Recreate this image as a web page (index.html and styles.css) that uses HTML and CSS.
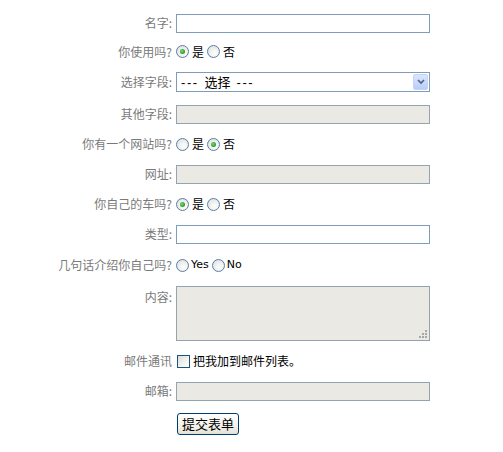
FILE: index.html
```html
<!DOCTYPE html>
<html lang="zh">
<head>
<meta charset="utf-8">
<title>表单</title>
<link rel="stylesheet" href="styles.css">
</head>
<body>
<form class="form">
  <div class="row">
    <label class="lbl">名字:</label>
    <input class="txt" type="text">
  </div>
  <div class="row row-r1">
    <span class="lbl">你使用吗?</span>
    <span class="opts">
      <span class="radio checked"></span><span class="opt">是</span>
      <span class="radio"></span><span class="opt">否</span>
    </span>
  </div>
  <div class="row row-sel">
    <label class="lbl">选择字段:</label>
    <div class="sel">
      <span class="sel-text"><span class="dash">---</span>  选择  <span class="dash">---</span></span>
      <span class="sel-btn"><svg width="8" height="6" viewBox="0 0 8 6"><path d="M1 1 L4 4 L7 1" fill="none" stroke="#4d6185" stroke-width="1.6"/></svg></span>
    </div>
  </div>
  <div class="row">
    <label class="lbl">其他字段:</label>
    <input class="txt dis" type="text" disabled>
  </div>
  <div class="row">
    <span class="lbl">你有一个网站吗?</span>
    <span class="opts">
      <span class="radio"></span><span class="opt">是</span>
      <span class="radio checked"></span><span class="opt">否</span>
    </span>
  </div>
  <div class="row">
    <label class="lbl">网址:</label>
    <input class="txt dis" type="text" disabled>
  </div>
  <div class="row">
    <span class="lbl">你自己的车吗?</span>
    <span class="opts">
      <span class="radio checked"></span><span class="opt">是</span>
      <span class="radio"></span><span class="opt">否</span>
    </span>
  </div>
  <div class="row">
    <label class="lbl">类型:</label>
    <input class="txt" type="text">
  </div>
  <div class="row row-r4">
    <span class="lbl">几句话介绍你自己吗?</span>
    <span class="opts">
      <span class="radio"></span><span class="opt en">Yes</span>
      <span class="radio"></span><span class="opt en">No</span>
    </span>
  </div>
  <div class="row row-area">
    <label class="lbl lbl-top">内容:</label>
    <div class="area">
      <span class="grip"><i></i><i></i><i></i><i></i><i></i><i></i></span>
    </div>
  </div>
  <div class="row">
    <span class="lbl">邮件通讯</span>
    <span class="opts">
      <span class="check"></span><span class="opt">把我加到邮件列表。</span>
    </span>
  </div>
  <div class="row">
    <label class="lbl">邮箱:</label>
    <input class="txt dis" type="text" disabled>
  </div>
  <div class="row row-btn">
    <span class="lbl"></span>
    <button class="btn" type="button">提交表单</button>
  </div>
</form>
</body>
</html>
```

FILE: styles.css
```css
* { box-sizing: border-box; }
html, body { margin: 0; padding: 0; background: #fff; }
body {
  font-family: "Noto Sans CJK SC", "Liberation Sans", sans-serif;
  font-size: 12px;
  color: #000;
}
.form {
  padding-top: 8px;
  width: 503px;
}
.row {
  display: flex;
  align-items: center;
  height: 30px;
}
.row-r1 { height: 27px; }
.row-sel { height: 34px; }
.row-r4 { height: 32px; }
.lbl {
  width: 176px;
  padding-right: 4px;
  text-align: right;
  color: #7a7a7a;
  font-size: 12px;
  line-height: 16px;
  flex: none;
}
.txt {
  width: 254px;
  height: 19px;
  border: 1px solid #7f9db9;
  background: #fff;
  padding: 0 2px;
  margin: 0;
  font: inherit;
}
.txt.dis {
  background: #ebe9e4;
  border-color: #93a3b0;
}
.opts {
  display: flex;
  align-items: center;
}
.radio {
  width: 13px;
  height: 13px;
  border-radius: 50%;
  border: 1px solid #5a7ea6;
  background: radial-gradient(circle at 60% 65%, #fff 0, #f2f2ee 40%, #d6d9dc 100%);
  position: relative;
  flex: none;
}
.radio.checked::after {
  content: "";
  position: absolute;
  left: 3px;
  top: 3px;
  width: 5px;
  height: 5px;
  border-radius: 50%;
  background: radial-gradient(circle at 40% 40%, #7ed67e 0, #2aa42a 60%, #1c8a1c 100%);
}
.opt {
  margin: 0 3px 0 3px;
  font-size: 12px;
  line-height: 16px;
}
.opt.en {
  font-family: "DejaVu Sans", sans-serif;
  font-size: 11px;
  margin-left: 2px;
}
.check {
  width: 13px;
  height: 13px;
  border: 1px solid #1c5180;
  background: linear-gradient(135deg, #dcdcd7 0, #f4f4f0 60%, #fff 100%);
  flex: none;
  margin-left: 1px;
}
.sel {
  position: relative;
  width: 254px;
  height: 20px;
  border: 1px solid #7f9db9;
  background: #fff;
  display: flex;
  align-items: center;
}
.sel-text {
  padding-left: 4px;
  font-size: 13px;
  line-height: 16px;
  white-space: pre;
}
.dash {
  font-family: "Liberation Sans", sans-serif;
  letter-spacing: 1.6px;
}
.sel-btn {
  position: absolute;
  right: 1px;
  top: 1px;
  width: 15px;
  height: 16px;
  background: linear-gradient(#dbe6fd, #b9cdf7);
  border: 1px solid #c3d3fd;
  border-radius: 2px;
  display: flex;
  align-items: center;
  justify-content: center;
}
.row-area {
  height: auto;
  align-items: flex-start;
  padding: 5px 0 5px;
}
.lbl-top { padding-top: 3px; }
.area {
  position: relative;
  width: 254px;
  height: 55px;
  border: 1px solid #93a3b0;
  background: #ebe9e4;
}
.grip {
  position: absolute;
  right: 2px;
  bottom: 2px;
  width: 8px;
  height: 8px;
}
.grip i {
  position: absolute;
  width: 2px;
  height: 2px;
  background: #a9a79f;
}
.grip i:nth-child(1) { right: 0; bottom: 0; }
.grip i:nth-child(2) { right: 3px; bottom: 0; }
.grip i:nth-child(3) { right: 6px; bottom: 0; }
.grip i:nth-child(4) { right: 0; bottom: 3px; }
.grip i:nth-child(5) { right: 3px; bottom: 3px; }
.grip i:nth-child(6) { right: 0; bottom: 6px; }
.row-btn { height: 36px; }
.btn {
  height: 22px;
  padding: 0 4px;
  margin-left: 1px;
  border: 1px solid #003c74;
  border-radius: 3px;
  background: linear-gradient(#fff, #f3f2ec 60%, #e3e1d6);
  font-family: "Noto Sans CJK SC", sans-serif;
  font-size: 13px;
  line-height: 18px;
  color: #000;
}
```
